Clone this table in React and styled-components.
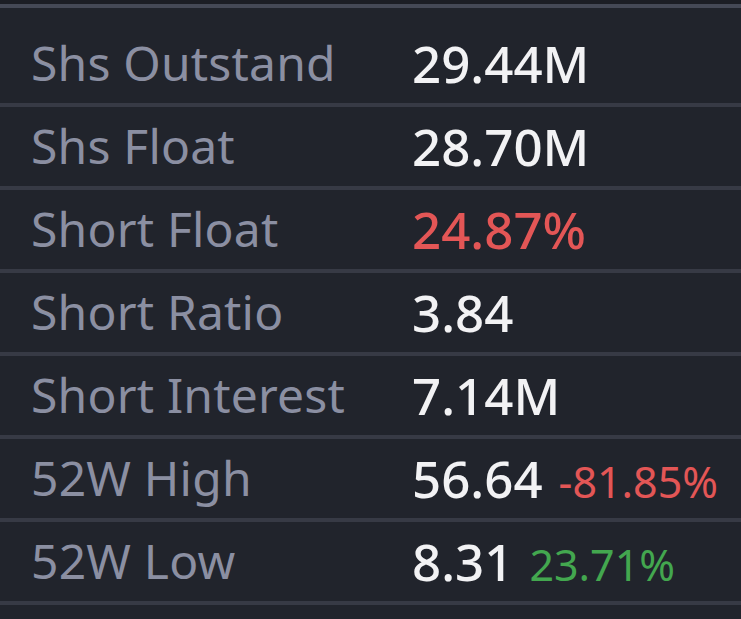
import styled, { createGlobalStyle } from 'styled-components';

const GlobalStyle = createGlobalStyle`
    body {
        margin: 0;
        background: #21242c;
        font-family: "Noto Sans", "Open Sans", sans-serif;
    }
`

const Panel = styled.div`
    width: 741px;
    height: 619px;
    overflow: hidden;
    background: #21242c;
    border-top: 4px solid #1c1e25;
`

const TopRule = styled.div`
    height: 4px;
    background: #454956;
    margin-bottom: 16px;
`

const Row = styled.div`
    display: grid;
    grid-template-columns: 412px 1fr;
    align-items: center;
    height: 79px;
    border-bottom: 4px solid #373a45;
`

const Label = styled.span`
    padding-left: 31px;
    font-size: 48px;
    font-weight: 400;
    letter-spacing: 0.2px;
    color: #8b8fa2;
    white-space: nowrap;
    margin-top: -2px;
`

const Value = styled.span`
    display: flex;
    align-items: baseline;
    gap: 16px;
    font-size: 51px;
    font-weight: 500;
    margin-top: -2px;
    color: ${p => p.$tone === 'down' ? '#e35656' : '#f2f2f4'};
    white-space: nowrap;
`

const Change = styled.span`
    font-size: 43px;
    font-weight: 400;
    color: ${p => p.$tone === 'down' ? '#e35656' : '#43a74f'};
`

const rows = [
    { label: 'Shs Outstand', value: '29.44M' },
    { label: 'Shs Float', value: '28.70M' },
    { label: 'Short Float', value: '24.87%', tone: 'down' },
    { label: 'Short Ratio', value: '3.84' },
    { label: 'Short Interest', value: '7.14M' },
    { label: '52W High', value: '56.64', change: '-81.85%', changeTone: 'down' },
    { label: '52W Low', value: '8.31', change: '23.71%', changeTone: 'up' },
]

export default function App() {
    return (
        <>
            <GlobalStyle />
            <Panel>
                <TopRule />
                {rows.map(r => (
                    <Row key={r.label}>
                        <Label>{r.label}</Label>
                        <Value $tone={r.tone}>
                            {r.value}
                            {r.change && <Change $tone={r.changeTone}>{r.change}</Change>}
                        </Value>
                    </Row>
                ))}
            </Panel>
        </>
    )
}
